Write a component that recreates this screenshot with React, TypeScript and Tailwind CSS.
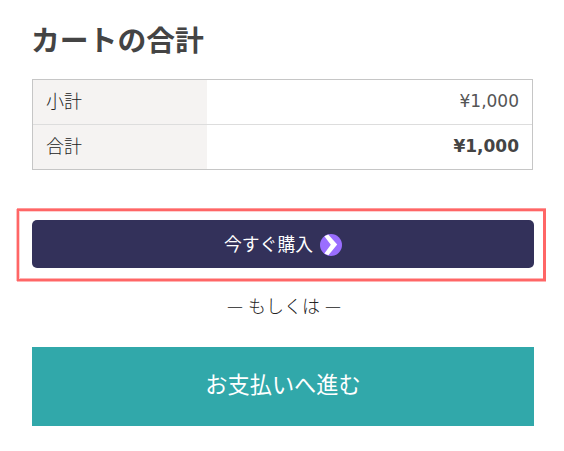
import React from 'react';

interface TotalRowProps {
  label: string;
  amount: string;
  strong?: boolean;
}

const TotalRow = ({ label, amount, strong }: TotalRowProps) => (
  <div className="flex h-[45px] border-t border-[#dddddd] first:h-11 first:border-t-0">
    <div className="flex w-[174px] items-center bg-[#f5f3f2] pb-1 pl-[13px] text-[18px] font-light text-[#222222]">
      {label}
    </div>
    <div
      className={`flex flex-1 items-center justify-end pr-[13px] font-['DejaVu_Sans',sans-serif] text-[17px] ${
        strong ? 'font-bold' : 'font-normal text-[#555555]'
      }`}
    >
      {amount}
    </div>
  </div>
);

const ArrowIcon = () => (
  <svg className="h-[22px] w-[22px]" viewBox="0 0 22 22" fill="none">
    <circle cx="11" cy="11" r="11" fill="#9a6eff" />
    <path d="M4.4 2.2 8.2 .6 17.2 10.6 8.4 21.2 4.4 19.6 10.8 10.8Z" fill="#fff" />
  </svg>
);

export default function App() {
  return (
    <main className="h-[451px] w-[564px] overflow-hidden bg-white pt-[18px] font-['Noto_Sans_CJK_JP',sans-serif] text-[#444444]">
      <h2 className="ml-[31px] h-[61px] text-[28.8px] leading-[42px] font-bold">カートの合計</h2>

      <div className="ml-8 w-[501px] border border-[#c6c6c6]">
        <TotalRow label="小計" amount="¥1,000" />
        <TotalRow label="合計" amount="¥1,000" strong />
      </div>

      <div className="mt-[39px] ml-[17px] h-[72px] w-[529px] border-2 border-r-3 border-[#ff6666] px-[13px] pt-[9px] pr-[11px] shadow-[-1px_0_0_0_#ffc0c0,0_-1px_0_0_#ff9999,0_1px_0_0_#ffb3b3,inset_1px_1px_0_0_#ffd0d0,inset_0_-1px_0_0_#ffb3b3]">
        <button className="flex h-12 w-[502px] items-center justify-center rounded-[5px] bg-[#33315a] text-[17.8px] text-white">
          <span className="pb-0.5">今すぐ購入</span>
          <span className="ml-[7px] pt-px">
            <ArrowIcon />
          </span>
        </button>
      </div>

      <p className="mt-[10px] ml-[33px] w-[502px] text-center text-[18px] leading-[28px] font-light text-[#222222]">
        <span className="mr-[5px] inline-block">—</span>もしくは
        <span className="ml-[5px] inline-block">—</span>
      </p>

      <button className="mt-[28px] ml-8 block h-[79px] w-[502px] bg-[#31a8aa] pb-[5px] text-[22.2px] text-white">
        お支払いへ進む
      </button>
    </main>
  );
}
